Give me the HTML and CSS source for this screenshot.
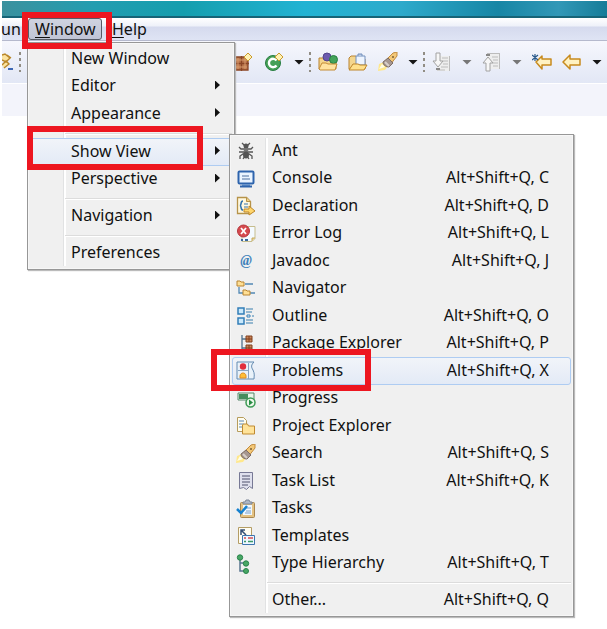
FILE: index.html
```html
<!DOCTYPE html>
<html lang="en">
<head>
<meta charset="utf-8">
<title>Show View</title>
<link rel="stylesheet" href="styles.css">
</head>
<body>
<div class="titlebar"></div>
<nav class="menubar" aria-label="Main menu">
  <button class="menu-title clipped">un</button>
  <button class="menu-title open"><u>W</u>indow</button>
  <button class="menu-title"><u>H</u>elp</button>
</nav>
<div class="toolbar" role="toolbar" aria-label="Main toolbar">
  <div class="tools-left">
    <button class="tool narrow" aria-label="Edit"><svg viewBox="0 0 12 20"><path d="M0 3l3-1 5 4-4 4-4-2M5 3l4 3M0 13l4-4 3 3-5 4" fill="#fbe3a0" stroke="#b98628" stroke-width="1.4"/><path d="M6 17h5" stroke="#3c67b5" stroke-width="2"/></svg></button>
    <span class="grip"></span>
  </div>
  <div class="tools">
    <button class="tool" aria-label="New Package"><svg viewBox="0 0 20 20"><path d="M1 5h13v13H1z" fill="#b8744a"/><path d="M1 5h13v13H1zM7.500 4v15M0 11.500h15" fill="none" stroke="#8a4525" stroke-width="1.300"/><path d="M4 6v11M11 6v11M2 8h11M2 15h11" stroke="#d79a6c" /><path d="M14 1l4 4-4 4-4-4z" fill="#fff2b5" stroke="#c99a2c"/></svg></button>
    <button class="tool" aria-label="New Class"><svg viewBox="0 0 20 20"><circle cx="9" cy="11" r="7.500" fill="#46a057" stroke="#267d40"/><path d="M12.500 8.500a4.200 4.200 0 1 0 0 5" fill="none" stroke="#fff" stroke-width="2.400"/><path d="M15 1l4 4-4 4-4-4z" fill="#fff2b5" stroke="#c99a2c"/></svg></button>
    <button class="caret" aria-label="New menu"></button>
    <span class="grip"></span>
    <button class="tool" aria-label="Open Type"><svg viewBox="0 0 20 20"><path d="M1 6h5l2 2h10v9H1z" fill="#f4d68e" stroke="#b98332"/><circle cx="9" cy="5" r="4" fill="#6b5aae" stroke="#51438c"/><circle cx="15.500" cy="7.500" r="4" fill="#43a35a" stroke="#277e41"/><path d="M1 17l3-6h4l2 1h9l-2 6H2z" fill="#ffe3a0" stroke="#c38b35"/></svg></button>
    <button class="tool" aria-label="Open Task"><svg viewBox="0 0 20 20"><path d="M1 17V6l2-2h5l2 3h7v10z" fill="#f4d68e" stroke="#b98332"/><path d="M8 4h9v9H8z" fill="#edf4ff" stroke="#7390bd"/><path d="M10 4V2h4v2" fill="#b8c9e4" stroke="#7390bd"/><path d="M1 18l4-6h5l2 1h7l-3 5H2z" fill="#ffe08c" stroke="#bd852b"/></svg></button>
    <button class="tool" aria-label="Search"><svg viewBox="0 0 20 20"><path d="M0 19l1-7 5-2 4 4-3 4z" fill="#ffe88c"/><path d="M1 17l3-5 3 3z" fill="#fffde8"/><path d="M8 8l7-7 4-1v4l-7 9z" fill="#f3c878" stroke="#c28b3e"/><path d="M5 10l5-4 5 5-4 4c-3 0-6-2-6-5z" fill="#a69790" stroke="#7d6d66"/><path d="M7 10l4 4" stroke="#d7cfca" stroke-width="2"/><circle cx="15" cy="5" r="1" fill="#7d6037"/></svg></button>
    <button class="caret" aria-label="Search menu"></button>
    <span class="grip"></span>
    <button class="tool" aria-label="Next Annotation"><svg viewBox="0 0 20 20"><path d="M5 4h13v15H5z" fill="#eee"/><path d="M17.500 4v15M10 6h6M11 9h5M11 12h5M9 15h7M5 18h8" stroke="#bcbcbc"/><path d="M4 1h4v8h3l-5 6-5-6h3z" fill="#f7f7f7" stroke="#a2a2a2"/><path d="M4 17h4" stroke="#888" stroke-width="2"/></svg></button>
    <button class="caret muted" aria-label="Next menu"></button>
    <button class="tool" aria-label="Previous Annotation"><svg viewBox="0 0 20 20"><path d="M5 1h13v16H5z" fill="#eee"/><path d="M17.500 1v16M5 1.500h12M10 5h6M11 8h5M11 11h5M11 14h5" stroke="#bcbcbc"/><path d="M4 19h4v-8h3L6 5l-5 6h3z" fill="#f7f7f7" stroke="#a2a2a2"/><path d="M4 3h4" stroke="#888" stroke-width="2"/></svg></button>
    <button class="caret muted" aria-label="Previous menu"></button>
    <button class="tool" aria-label="Last Edit Location"><svg viewBox="0 0 20 20"><path d="M4 10l6-6v3h9v6h-9v4z" fill="#fff2c2" stroke="#c78a1e" stroke-width="1.500" stroke-linejoin="round"/><path d="M3 2v7M0 3l6 5M6 3L0 8" stroke="#29598b" stroke-width="1.200"/></svg></button>
    <button class="tool" aria-label="Back"><svg viewBox="0 0 20 20"><path d="M1 10l7-7v4h10v6H8v4z" fill="#fff2c2" stroke="#c78a1e" stroke-width="1.500" stroke-linejoin="round"/></svg></button>
    <button class="caret" aria-label="Back menu"></button>
  </div>
</div>
<div class="subbar"></div>
<main class="editor"></main>

<ul class="menu window-menu">
  <li><button class="item">New Window</button></li>
  <li><button class="item more">Editor</button></li>
  <li><button class="item more">Appearance</button></li>
  <li class="separator"></li>
  <li><button class="item more selected">Show View</button></li>
  <li><button class="item more">Perspective</button></li>
  <li class="separator"></li>
  <li><button class="item more">Navigation</button></li>
  <li class="separator"></li>
  <li><button class="item">Preferences</button></li>
</ul>

<ul class="menu view-menu">
  <li><button class="item"><svg viewBox="0 0 20 20"><g fill="none" stroke="#555" stroke-width="1.300"><path d="M6 2l3 3M14 2l-3 3M3 6l2 2h10l2-2M3 11h14M4 18v-3l3-2h6l3 2v3M7 18l2-3M13 18l-2-3"/></g><circle cx="10" cy="5" r="2.500" fill="#555"/><ellipse cx="10" cy="9.500" rx="2.200" ry="2.500" fill="#777"/><ellipse cx="10" cy="14" rx="3" ry="3.500" fill="#555"/></svg><span>Ant</span></button></li>
  <li><button class="item"><svg viewBox="0 0 20 20"><rect x="2.500" y="2.500" width="15" height="12" rx="1" fill="#eaf4ff" stroke="#2e64ad" stroke-width="2"/><path d="M6 7h7M6 10h8" stroke="#4c6f9e"/><path d="M6 15h8v2H6z" fill="#6c96cb"/><path d="M4 17.500h12" stroke="#2e64ad" stroke-width="2"/></svg><span>Console</span><kbd>Alt+Shift+Q, C</kbd></button></li>
  <li><button class="item"><svg viewBox="0 0 20 20"><path d="M1.500 1.500h9l4 4v12h-13z" fill="#fff8df" stroke="#b69349" stroke-width="1.300"/><path d="M10.500 1.500v4h4" fill="#ead18e" stroke="#b69349"/><path d="M7 5c-3 0-1 4-3 4.500C6 10 4 14 7 14" fill="none" stroke="#3474ae" stroke-width="1.600"/><path d="M8 8h4M8 11h4" stroke="#3474ae"/><path d="M8 13h5v-3l6 5-6 4v-3H8z" fill="#ffd66d" stroke="#bd8729"/></svg><span>Declaration</span><kbd>Alt+Shift+Q, D</kbd></button></li>
  <li><button class="item"><svg viewBox="0 0 20 20"><path d="M6 2.500h13v12l-3 3H6z" fill="#f4faff" stroke="#c6bd8d"/><path d="M16 17v-3h3" fill="#ead48e" stroke="#c6aa5e"/><circle cx="7.500" cy="7" r="6" fill="#d64a4e" stroke="#b5353b"/><path d="M5 4l5 6M10 4l-5 6" stroke="#fff" stroke-width="1.800"/><path d="M5 16h2M9 16h3" stroke="#39679b" stroke-width="2"/></svg><span>Error Log</span><kbd>Alt+Shift+Q, L</kbd></button></li>
  <li><button class="item"><svg viewBox="0 0 20 20"><text class="at-sign" x="10" y="14" text-anchor="middle">@</text></svg><span>Javadoc</span><kbd>Alt+Shift+Q, J</kbd></button></li>
  <li><button class="item"><svg viewBox="0 0 20 20"><path d="M3 8v6h4M9 5h8M14 14h5" fill="none" stroke="#5288b4" stroke-width="1.300"/><path d="M1 2h3l1 1h3v4H1zM7 11h3l1 1h3v4H7z" fill="#ffdf95" stroke="#b88430"/></svg><span>Navigator</span></button></li>
  <li><button class="item"><svg viewBox="0 0 20 20"><path d="M2 2h6v6H2zM2 12h6v6H2z" fill="#c9e8fb" stroke="#327eb8" stroke-width="1.500"/><path d="M10 3h7M10 6h6M16 10h2M10 14h7M10 17h7" stroke="#397ead" stroke-width="1.200"/><path d="M11 9h3v2h-3z" fill="#fff" stroke="#327eb8"/></svg><span>Outline</span><kbd>Alt+Shift+Q, O</kbd></button></li>
  <li><button class="item"><svg viewBox="0 0 20 20"><path d="M6 1v17M6 5h4M6 14h4" stroke="#50718d" stroke-width="1.300"/><path d="M10 2h6v6h-6zM10 11h6v6h-6z" fill="#c98458" stroke="#81401f"/><path d="M13 2v6M10 5h6M13 11v6M10 14h6" stroke="#81401f"/></svg><span>Package Explorer</span><kbd>Alt+Shift+Q, P</kbd></button></li>
  <li><button class="item selected"><svg viewBox="0 0 20 20"><path d="M1 1h17c-3 3-3 5-1 8 2 4 1 6 1 9H1z" fill="#e9f2fa" stroke="#648bb1"/><path d="M2 9.500h11M12.500 2v16" stroke="#89a4c1"/><circle cx="7" cy="5.500" r="3.200" fill="#e22e3c"/><path d="M4 17v-2c0-4 6-4 6 0v2z" fill="#ffbe36" stroke="#dd8d23"/></svg><span>Problems</span><kbd>Alt+Shift+Q, X</kbd></button></li>
  <li><button class="item"><svg viewBox="0 0 20 20"><path d="M2 4h16v7H2z" fill="#eaf5e9" stroke="#57866b"/><path d="M3 5h9v5H3z" fill="#468d5d"/><circle cx="14.500" cy="13.500" r="4.500" fill="#eef9ec" stroke="#3d9a55" stroke-width="1.500"/><path d="M13 10.500l4 3-4 3z" fill="#268b43"/></svg><span>Progress</span></button></li>
  <li><button class="item"><svg viewBox="0 0 20 20"><path d="M1.500 1.500h6l3 3v11h-9z" fill="#fffdf0" stroke="#b69c5c"/><path d="M3 5h5M3 8h5M3 11h3" stroke="#5c88b5"/><path d="M6.500 9l1-1h4l1 2h6v8h-12z" fill="#ffe39a" stroke="#c08a31"/></svg><span>Project Explorer</span></button></li>
  <li><button class="item"><svg viewBox="0 0 20 20"><path d="M0 19l1-7 5-2 4 4-3 4z" fill="#ffe88c"/><path d="M1 17l3-5 3 3z" fill="#fffde8"/><path d="M8 8l7-7 4-1v4l-7 9z" fill="#f3c878" stroke="#c28b3e"/><path d="M5 10l5-4 5 5-4 4c-3 0-6-2-6-5z" fill="#a69790" stroke="#7d6d66"/><path d="M7 10l4 4" stroke="#d7cfca" stroke-width="2"/><circle cx="15" cy="5" r="1" fill="#7d6037"/></svg><span>Search</span><kbd>Alt+Shift+Q, S</kbd></button></li>
  <li><button class="item"><svg viewBox="0 0 20 20"><path d="M3.500 1.500h13v16l-3-2-3 3-3-2-4 1z" fill="#dfe0ed" stroke="#777995"/><path d="M6 5h8M6 8h8M6 11h8M6 14h6" stroke="#4f506d"/></svg><span>Task List</span><kbd>Alt+Shift+Q, K</kbd></button></li>
  <li><button class="item"><svg viewBox="0 0 20 20"><rect x="4.500" y="3.500" width="14" height="15" rx="1" fill="#e4c283" stroke="#aa8750"/><path d="M7 6h9v10H7z" fill="#eff7ff"/><path d="M7 5V3h2l1-2h3l1 2h2v2z" fill="#aeb7c5" stroke="#7d8798"/><path d="M10 9h5M10 12h5M9 14h6" stroke="#789dc5"/><path d="M1 10l4 4 6-7" fill="none" stroke="#1681cf" stroke-width="2.500"/></svg><span>Tasks</span></button></li>
  <li><button class="item"><svg viewBox="0 0 20 20"><path d="M2.500 1.500h13v16h-13z" fill="#fffdf2" stroke="#b49d65"/><path d="M5 9V4h4M5 4l5 5" fill="none" stroke="#344f76" stroke-width="1.500"/><path d="M6.500 9.500h12v9h-12z" fill="#eef6ff" stroke="#3e75ae"/><path d="M8 12h2M12 12h5" stroke="#d64f51" stroke-width="1.500"/><path d="M8 15.500h2M12 15.500h5" stroke="#3b9a67" stroke-width="1.500"/></svg><span>Templates</span></button></li>
  <li><button class="item"><svg viewBox="0 0 20 20"><path d="M4 5v12h5M4 9h5" fill="none" stroke="#57748d" stroke-width="1.500"/><g fill="#48a765" stroke="#28834a"><circle cx="4" cy="3.500" r="2.700"/><circle cx="10" cy="9.500" r="2.700"/><circle cx="10" cy="17" r="2.500"/></g></svg><span>Type Hierarchy</span><kbd>Alt+Shift+Q, T</kbd></button></li>
  <li class="separator"></li>
  <li><button class="item"><svg viewBox="0 0 20 20"></svg><span>Other...</span><kbd>Alt+Shift+Q, Q</kbd></button></li>
</ul>

<div class="callout on-window"></div>
<div class="callout on-show-view"></div>
<div class="callout on-problems"></div>
</body>
</html>
```
FILE: styles.css
```css
* { box-sizing: border-box; }

body {
  margin: 0;
  padding: 1px 0 0 2px;
  background: #fff;
  color: #111;
  font: 16px/20px "Noto Sans", "Open Sans", sans-serif;
}

button {
  margin: 0;
  padding: 0;
  border: 0;
  background: none;
  color: inherit;
  font: inherit;
}

svg { display: block; }

.titlebar {
  height: 17px;
  border-bottom: 2px solid #176477;
  background:
    radial-gradient(ellipse at 57px 12px, #4fb99a 0, transparent 22px),
    radial-gradient(ellipse at 153px 8px, #2a83ae 0, transparent 24px),
    linear-gradient(90deg, #3b919e 0, #239db0 15%, #159eae 30%, #22b3d3 50%, #2eaacb 66%, #1786a5 82%, #3298b7 92%, #167c98 100%);
}

.menubar {
  display: flex;
  align-items: stretch;
  height: 23px;
  border-bottom: 1px solid #b5b9cd;
  background: linear-gradient(#fff 0, #eef1f9 8px, #d5daee 9px, #dfe4f4 100%);
}

.menu-title {
  padding: 0 6px;
  border: 1px solid transparent;
  border-radius: 3px;
}

.menu-title.clipped {
  width: 26px;
  padding: 0;
  text-align: left;
  text-indent: -2px;
}

.menu-title.open {
  width: 74px;
  margin-right: 3px;
  border-color: #565a66;
  background: linear-gradient(#d0d3df, #c0c4d5);
}

.menu-title u { text-underline-offset: 2px; }

.toolbar {
  display: flex;
  justify-content: space-between;
  align-items: center;
  height: 43px;
  padding-right: 5px;
  border-bottom: 1px solid #fff;
  background: linear-gradient(#f6f7fd, #e2e7f5);
}

.tools, .tools-left {
  display: flex;
  align-items: center;
  gap: 10px;
}

.tool {
  flex: none;
  width: 20px;
  height: 20px;
}

.tool.narrow { width: 12px; }

.tool svg { width: 100%; height: 100%; }

.caret {
  width: 10px;
  height: 5px;
  background: #161616;
  clip-path: polygon(0 0, 100% 0, 50% 100%);
}

.caret.muted { background: #777; }

.grip {
  width: 2px;
  height: 20px;
  margin: 0 -3px 0 -5px;
  background: repeating-linear-gradient(#918d84 0, #918d84 3px, transparent 3px, transparent 6px);
}

.subbar {
  height: 32px;
  background: #f3f4fb;
}

.menu {
  position: absolute;
  margin: 0;
  padding: 2px;
  border: 1px solid #979797;
  box-shadow: 1px 1px 1px #bbb, inset 0 0 0 1px #f7f7f7;
  background: #f0f0f0;
  list-style: none;
}

.menu::before {
  content: "";
  position: absolute;
  top: 3px;
  bottom: 3px;
  left: 35px;
  width: 2px;
  border-left: 1px solid #e1e2e3;
  background: #fff;
}

.menu li {
  position: relative;
  height: 28px;
}

.menu li:nth-child(even) { height: 27px; }

.menu .separator, .menu .separator:nth-child(even) {
  height: 10px;
  margin-left: 35px;
  border-bottom: 3px solid transparent;
  background: linear-gradient(transparent 5px, #dcdcdc 5px, #dcdcdc 6px, #fff 6px);
  background-clip: padding-box;
}

.item {
  display: flex;
  align-items: center;
  width: 100%;
  height: 100%;
  border: 1px solid transparent;
  border-radius: 3px;
  text-align: left;
}

.item.selected {
  border-color: #aeccf2;
  background: linear-gradient(#f1f4f9, #e3eaf6);
}

.window-menu {
  top: 42px;
  left: 27px;
  width: 208px;
}

.window-menu .item { padding: 0 11px 3px 40px; }

.item.more::after {
  content: "";
  width: 5px;
  height: 9px;
  margin-left: auto;
  background: #111;
  clip-path: polygon(0 0, 100% 50%, 0 100%);
}

.view-menu {
  top: 134px;
  left: 229px;
  width: 345px;
}

.view-menu .item { padding: 0 21px 0 3px; }

.view-menu svg {
  width: 20px;
  height: 20px;
  margin-right: 16px;
}

.view-menu span, .view-menu kbd { padding-bottom: 3px; }

.item kbd {
  margin-left: auto;
  font: inherit;
}

.at-sign {
  fill: #3f82ba;
  font: italic bold 14px "Liberation Serif", serif;
}

.callout {
  position: absolute;
  border: 6px solid #ed1620;
  pointer-events: none;
}

.on-window {
  top: 12px;
  left: 22px;
  width: 90px;
  height: 37px;
}

.on-show-view {
  top: 126px;
  left: 27px;
  width: 176px;
  height: 44px;
}

.on-problems {
  top: 349px;
  left: 211px;
  width: 160px;
  height: 42px;
}
```
